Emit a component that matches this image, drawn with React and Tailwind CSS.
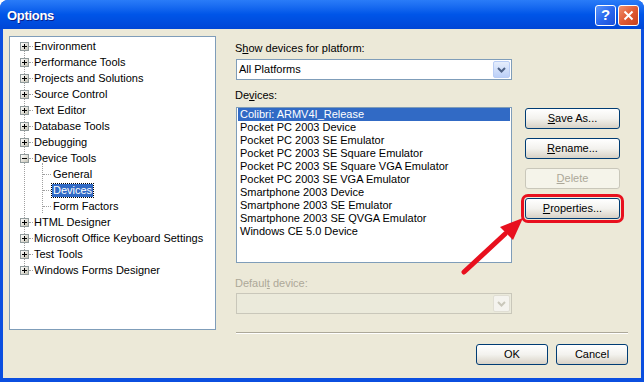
import React from 'react'

const roots1 = ['Environment', 'Performance Tools', 'Projects and Solutions', 'Source Control', 'Text Editor', 'Database Tools', 'Debugging']
const roots2 = ['HTML Designer', 'Microsoft Office Keyboard Settings', 'Test Tools', 'Windows Forms Designer']
const devices = [
  'Colibri: ARMV4I_Release',
  'Pocket PC 2003 Device',
  'Pocket PC 2003 SE Emulator',
  'Pocket PC 2003 SE Square Emulator',
  'Pocket PC 2003 SE Square VGA Emulator',
  'Pocket PC 2003 SE VGA Emulator',
  'Smartphone 2003 Device',
  'Smartphone 2003 SE Emulator',
  'Smartphone 2003 SE QVGA Emulator',
  'Windows CE 5.0 Device',
]

function Expander({ open }) {
  return (
    <div className="relative z-10 w-[9px] h-[9px] border border-[#919b9c] bg-gradient-to-br from-white to-[#c6c3b5] flex items-center justify-center">
      <div className="absolute w-[5px] h-px bg-black" />
      {!open && <div className="absolute w-px h-[5px] bg-black" />}
    </div>
  )
}

function RootRow({ label, open }) {
  return (
    <div className="flex items-center h-4">
      <div className="w-[10px]" />
      <Expander open={open} />
      <div className="w-[4px] border-t border-dotted border-[#a0a0a0]" />
      <span className="px-px leading-[13px]">{label}</span>
    </div>
  )
}

function ChildRow({ label, selected }) {
  return (
    <div className="flex items-center h-4">
      <div className="w-[33px]" />
      <div className="w-[8px] border-t border-dotted border-[#a0a0a0]" />
      <span className={selected ? 'ml-px px-px leading-[13px] bg-[#316ac5] text-white outline outline-1 outline-dotted outline-[#000]' : 'ml-px px-px leading-[13px]'}>
        {label}
      </span>
    </div>
  )
}

function XPButton({ children, disabled, className = '' }) {
  const look = disabled
    ? 'border-[#c9c7ba] bg-[#f5f4ea] text-[#aca899]'
    : 'border-[#003c74] bg-gradient-to-b from-white via-[#f3f2ee] to-[#d8d2c6] text-black'
  return (
    <button className={`h-[21px] rounded-[3px] border text-[11px] leading-none ${look} ${className}`}>{children}</button>
  )
}

function ComboArrow({ disabled }) {
  return (
    <div
      className={
        disabled
          ? 'w-[17px] h-[17px] rounded-[2px] border border-[#e0ded3] bg-[#f4f3ee] flex items-center justify-center'
          : 'w-[17px] h-[17px] rounded-[2px] border border-[#b9cdf5] bg-gradient-to-b from-[#e6eefc] to-[#bcd0f8] flex items-center justify-center'
      }
    >
      <svg width="9" height="6" viewBox="0 0 9 6">
        <path d="M1 1 L4.5 4.5 L8 1" stroke={disabled ? '#c9c7ba' : '#4d6185'} strokeWidth="2" fill="none" />
      </svg>
    </div>
  )
}

export default function App() {
  return (
    <div className="relative w-[644px] h-[382px] bg-white font-['Tahoma','Liberation_Sans',sans-serif] text-[11px] text-black overflow-hidden">
      {/* Window */}
      <div className="w-[644px] h-[382px] rounded-t-[8px] bg-[#0b4fe0] flex flex-col">
        {/* Title bar */}
        <div className="h-[29px] rounded-t-[8px] bg-gradient-to-b from-[#2a7cf8] via-[#0055e8] to-[#0046d6] flex items-center pl-[7px] pr-[5px]">
          <span className="font-['Liberation_Sans',sans-serif] font-bold text-[13px] tracking-[-0.3px] text-white [text-shadow:1px_1px_0_#0a1f8a] mt-[2px]">
            Options
          </span>
          <div className="ml-auto flex gap-[2px] mt-[1px]">
            <div className="w-[21px] h-[21px] rounded-[3px] border border-white bg-gradient-to-br from-[#5c95fa] via-[#2a68ee] to-[#1b4fd8] flex items-center justify-center text-white font-bold text-[15px] font-['Liberation_Sans',sans-serif]">
              ?
            </div>
            <div className="w-[21px] h-[21px] rounded-[3px] border border-white bg-gradient-to-br from-[#f0906c] via-[#e05a33] to-[#c8401c] flex items-center justify-center">
              <svg width="11" height="11" viewBox="0 0 11 11">
                <path d="M1.5 1.5 L9.5 9.5 M9.5 1.5 L1.5 9.5" stroke="white" strokeWidth="2" />
              </svg>
            </div>
          </div>
        </div>

        {/* Body */}
        <div className="mx-[3px] h-[349px] bg-[#ece9d8] flex pt-[7px] pl-[6px]">
          {/* Tree */}
          <div className="relative w-[207px] h-[294px] bg-white border border-[#7f9db9] pt-px">
            <div className="absolute left-[14px] top-[9px] h-[224px] border-l border-dotted border-[#a0a0a0]" />
            <div className="absolute left-[32px] top-[126px] h-[50px] border-l border-dotted border-[#a0a0a0]" />
            {roots1.map((r) => (
              <RootRow key={r} label={r} />
            ))}
            <RootRow label="Device Tools" open />
            <ChildRow label="General" />
            <ChildRow label="Devices" selected />
            <ChildRow label="Form Factors" />
            {roots2.map((r) => (
              <RootRow key={r} label={r} />
            ))}
          </div>

          {/* Right side */}
          <div className="ml-[20px] w-[392px] flex flex-col">
            <div className="flex">
              <div className="w-[276px] flex flex-col">
                <div className="mt-[6px] h-[13px] leading-[13px] -ml-px">
                  S<span className="underline">h</span>ow devices for platform:
                </div>
                <div className="mt-[4px] h-[21px] border border-[#7f9db9] bg-white flex items-center pl-[2px] pr-[1px]">
                  <span className="flex-1">All Platforms</span>
                  <ComboArrow />
                </div>
                <div className="mt-[9px] h-[13px] leading-[13px] -ml-px">
                  De<span className="underline">v</span>ices:
                </div>
                <div className="mt-[5px] h-[156px] border border-[#7f9db9] bg-white pl-px pr-px">
                  {devices.map((d, i) => (
                    <div
                      key={d}
                      className={i === 0 ? 'h-[13px] leading-[13px] pl-[2px] bg-[#316ac5] text-white' : 'h-[13px] leading-[13px] pl-[2px]'}
                    >
                      {d}
                    </div>
                  ))}
                </div>
                <div className="mt-[14px] h-[13px] leading-[13px] -ml-px text-[#aca899]">
                  Defaul<span className="underline">t</span> device:
                </div>
                <div className="mt-[3px] h-[21px] border border-[#c9c7ba] bg-[#ebeadb] flex items-center justify-end pr-[1px]">
                  <ComboArrow disabled />
                </div>
              </div>

              <div className="ml-[13px] w-[95px] flex flex-col gap-[9px] pt-[72px]">
                <XPButton>
                  <span className="underline">S</span>ave As...
                </XPButton>
                <XPButton>
                  <span className="underline">R</span>ename...
                </XPButton>
                <XPButton disabled>
                  <span className="underline">D</span>elete
                </XPButton>
                <XPButton className="outline-[3px] outline-solid outline-[#e8101e] outline-offset-[1px]">
                  <span className="underline">P</span>roperties...
                </XPButton>
              </div>
            </div>

            <div className="mt-[18px] h-[2px] border-t border-[#aca899] border-b border-b-white" />
            <div className="mt-[10px] flex justify-end gap-[8px]">
              <XPButton className="w-[72px]">OK</XPButton>
              <XPButton className="w-[72px]">Cancel</XPButton>
            </div>
          </div>
        </div>
      </div>

      {/* Red arrow annotation */}
      <svg className="absolute left-0 top-0 pointer-events-none" width="644" height="382" viewBox="0 0 644 382">
        <line x1="464" y1="272" x2="505" y2="234" stroke="#e8101e" strokeWidth="5" strokeLinecap="round" />
        <polygon points="523,218 500,227 513,240" fill="#e8101e" />
      </svg>
    </div>
  )
}
